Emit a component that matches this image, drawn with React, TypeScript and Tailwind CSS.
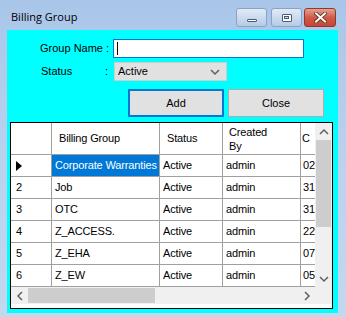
import React from "react";

const rows = [
  ["Corporate Warranties", "Active", "admin", "02"],
  ["Job", "Active", "admin", "31"],
  ["OTC", "Active", "admin", "31"],
  ["Z_ACCESS.", "Active", "admin", "22"],
  ["Z_EHA", "Active", "admin", "07"],
  ["Z_EW", "Active", "admin", "05"],
];

function Chevron({ dir }: { dir: "up" | "down" | "left" | "right" }) {
  const pts = {
    up: "1,6 5,2 9,6",
    down: "1,2 5,6 9,2",
    left: "6,1 2,5 6,9",
    right: "2,1 6,5 2,9",
  }[dir];
  const wide = dir === "up" || dir === "down";
  return (
    <svg width={wide ? 10 : 8} height={wide ? 8 : 10} viewBox={wide ? "0 0 10 8" : "0 0 8 10"}>
      <polyline points={pts} fill="none" stroke="#606060" strokeWidth="1.5" />
    </svg>
  );
}

export default function App() {
  return (
    <div className="flex h-[317px] w-[346px] flex-col overflow-hidden bg-gradient-to-b from-[#a9c6e9] via-[#bad2ee] to-[#c3d8ef] font-['Liberation_Sans',Arial,sans-serif] text-black">
      {/* title bar */}
      <div className="flex h-[30px] shrink-0 items-start">
        <span className="ml-[11px] mt-[9px] font-['Open_Sans',sans-serif] text-[11px] leading-[16px] text-black">
          Billing Group
        </span>
        <div className="ml-auto mr-[10px] mt-[8px] flex">
          <div className="flex h-[19px] w-[31px] items-center justify-center rounded-[3px] border border-[#8aa3c4] bg-gradient-to-b from-[#e1ebf7] to-[#b5cbe6]">
            <div className="mt-[5px] h-[3px] w-[10px] rounded-[1px] border border-[#4a5a72] bg-white" />
          </div>
          <div className="ml-[4px] flex h-[19px] w-[31px] items-center justify-center rounded-[3px] border border-[#8aa3c4] bg-gradient-to-b from-[#e1ebf7] to-[#b5cbe6]">
            <div className="flex h-[8px] w-[10px] items-center justify-center rounded-[1px] border border-[#4a5a72] bg-white">
              <div className="h-[3px] w-[5px] border border-[#4a5a72] bg-[#cfdcec]" />
            </div>
          </div>
          <div className="ml-[2px] flex h-[19px] w-[32px] items-center justify-center rounded-[3px] border border-[#8a3a2e] bg-gradient-to-b from-[#e6a091] via-[#cf5a47] to-[#c54634]">
            <svg width="13" height="11" viewBox="0 0 13 11">
              <path d="M2 1.5 L11 9.5 M11 1.5 L2 9.5" stroke="#5a2a22" strokeWidth="3.6" strokeLinecap="square" />
              <path d="M2 1.5 L11 9.5 M11 1.5 L2 9.5" stroke="#ffffff" strokeWidth="2" strokeLinecap="square" />
            </svg>
          </div>
        </div>
      </div>

      {/* client area */}
      <div className="ml-[7px] flex h-[283px] w-[331px] shrink-0 flex-col bg-[#00ffff] text-[11px]">
        <div className="mt-[9px] flex h-[19px] items-center pl-[33px]">
          <span className="w-[73px] whitespace-nowrap leading-none">Group Name :</span>
          <div className="flex h-[19px] w-[191px] items-center border border-[#0078d7] bg-white pl-[3px]">
            <div className="h-[13px] w-px bg-black" />
          </div>
        </div>
        <div className="mt-[4px] flex h-[19px] items-center pl-[34px]">
          <span className="w-[64px] leading-none">Status</span>
          <span className="w-[9px] leading-none">:</span>
          <div className="flex h-[19px] w-[113px] items-center justify-between border border-[#cccccc] bg-[#e1e1e1] pl-[3px] pr-[6px]">
            <span className="leading-none">Active</span>
            <Chevron dir="down" />
          </div>
        </div>
        <div className="mt-[8px] flex h-[28px] gap-[4px] pl-[121px]">
          <div className="flex w-[96px] items-center justify-center border-2 border-[#0078d7] bg-[#e1e1e1]">
            Add
          </div>
          <div className="flex w-[96px] items-center justify-center border border-[#adadad] bg-[#e1e1e1]">
            Close
          </div>
        </div>

        {/* grid */}
        <div className="ml-[3px] mt-[5px] flex h-[187px] w-[323px] flex-col border border-black bg-white text-[11px] tracking-[-0.15px]">
          <div className="flex h-[164px]">
            <div className="w-[304px] overflow-hidden">
              <div className="flex h-[32px] border-b border-[#a0a0a0]">
                <div className="w-[41px] shrink-0 border-r border-[#a0a0a0]" />
                <div className="flex w-[108px] shrink-0 items-center border-r border-[#a0a0a0] pl-[7px]">Billing Group</div>
                <div className="flex w-[63px] shrink-0 items-center border-r border-[#a0a0a0] pl-[7px]">Status</div>
                <div className="flex w-[78px] shrink-0 items-center border-r border-[#a0a0a0] pl-[6px] leading-[14px]">
                  Created
                  <br />
                  By
                </div>
                <div className="flex w-[14px] shrink-0 items-center overflow-hidden pl-[1px]">C</div>
              </div>
              {rows.map((r, i) => (
                <div key={i} className="flex h-[22px] border-b border-[#a0a0a0]">
                  <div className="flex w-[41px] shrink-0 items-center border-r border-[#a0a0a0] pl-[5px]">
                    {i === 0 ? (
                      <svg width="6" height="10" viewBox="0 0 6 10">
                        <path d="M0 0 L6 5 L0 10 Z" fill="#000" />
                      </svg>
                    ) : (
                      i + 1
                    )}
                  </div>
                  <div
                    className={
                      i === 0
                        ? "flex w-[108px] shrink-0 items-center overflow-hidden whitespace-nowrap border-r border-[#a0a0a0] bg-[#0078d7] pl-[3px] text-white"
                        : "flex w-[108px] shrink-0 items-center overflow-hidden whitespace-nowrap border-r border-[#a0a0a0] pl-[3px]"
                    }
                  >
                    {r[0]}
                  </div>
                  <div className="flex w-[63px] shrink-0 items-center border-r border-[#a0a0a0] pl-[3px]">{r[1]}</div>
                  <div className="flex w-[78px] shrink-0 items-center border-r border-[#a0a0a0] pl-[3px]">{r[2]}</div>
                  <div className="flex w-[14px] shrink-0 items-center overflow-hidden pl-[2px]">{r[3]}</div>
                </div>
              ))}
            </div>
            {/* vertical scrollbar */}
            <div className="flex w-[17px] flex-col bg-[#f0f0f0]">
              <div className="flex h-[17px] items-center justify-center">
                <Chevron dir="up" />
              </div>
              <div className="mx-[1px] h-[87px] bg-[#cdcdcd]" />
              <div className="flex-1" />
              <div className="flex h-[17px] items-center justify-center">
                <Chevron dir="down" />
              </div>
            </div>
          </div>
          {/* horizontal scrollbar */}
          <div className="flex h-[17px]">
            <div className="flex w-[304px] bg-[#f0f0f0]">
              <div className="flex w-[17px] items-center justify-center">
                <Chevron dir="left" />
              </div>
              <div className="my-[1px] w-[127px] bg-[#cdcdcd]" />
              <div className="flex-1" />
              <div className="flex w-[17px] items-center justify-center">
                <Chevron dir="right" />
              </div>
            </div>
            <div className="w-[17px] bg-[#f0f0f0]" />
          </div>
        </div>
      </div>
    </div>
  );
}
